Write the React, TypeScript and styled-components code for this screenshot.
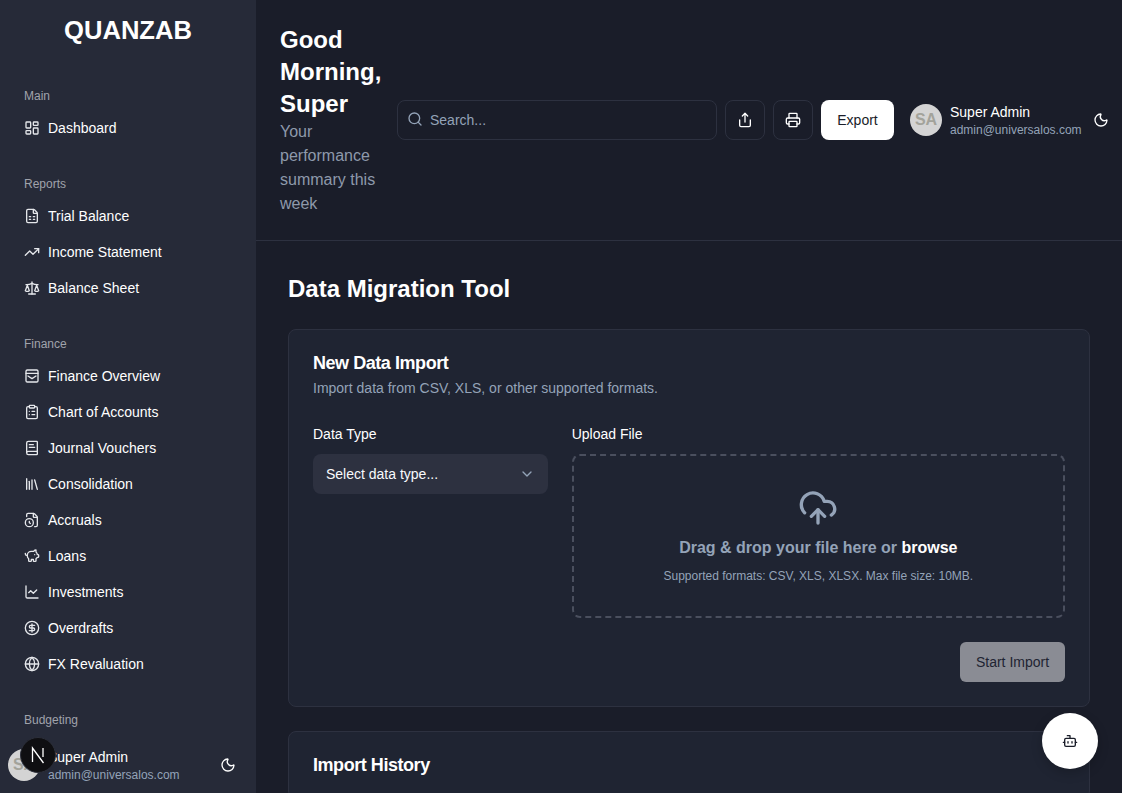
import React from "react";
import styled, { createGlobalStyle } from "styled-components";
import {
  LayoutDashboard, FileSpreadsheet, TrendingUp, Scale, ClipboardList, Library,
  FileClock, PiggyBank, ChartLine, CircleDollarSign, Globe, Moon, Search, Share, Printer,
  ChevronDown, CloudUpload, Bot, BookText,
} from "lucide-react";

const Global = createGlobalStyle`
  * { box-sizing: border-box; }
  html, body { margin: 0; height: 100%; overflow: hidden; background: #1a1d29; }
  body { font-family: "Liberation Sans", Arial, sans-serif; color: #fff; }
`;

const Shell = styled.div`
  display: flex;
  height: 793px;
  overflow: hidden;
`;
const Sidebar = styled.aside`
  width: 256px;
  flex: none;
  background: #262a38;
  display: flex;
  flex-direction: column;
  height: 100%;
`;
const Logo = styled.div`
  font-size: 25.6px;
  font-weight: 700;
  line-height: 32px;
  text-align: center;
  padding-top: 14px;
  height: 88px;
`;
const Nav = styled.nav`
  flex: 1;
  min-height: 0;
  overflow: hidden;
  padding: 0 24px;
`;
const Section = styled.section`
  margin-bottom: 30px;
`;
const SectionLabel = styled.div`
  font-size: 12px;
  line-height: 16px;
  color: #a0a3ac;
  margin-bottom: 6px;
`;
const NavItem = styled.a`
  display: flex;
  align-items: center;
  gap: 8px;
  height: 36px;
  font-size: 14px;
  color: #fff;
  svg { flex: none; color: #e5e7eb; }
`;
const SideFooter = styled.div`
  flex: none;
  height: 56px;
  display: flex;
  align-items: center;
  padding: 0 20px 0 8px;
  gap: 8px;
  background: #262a38;
`;
const Avatar = styled.div`
  width: 32px;
  height: 32px;
  flex: none;
  border-radius: 50%;
  background: #d4d4d4;
  color: #a3a39b;
  font-weight: 700;
  font-size: 16px;
  display: flex;
  align-items: center;
  justify-content: center;
`;
const UserText = styled.div<{ $grow?: boolean }>`
  flex: ${(p) => (p.$grow ? 1 : "none")};
  min-width: 0;
`;
const UserName = styled.div`
  font-size: 14px;
  line-height: 20px;
  color: #fff;
`;
const UserEmail = styled.div`
  font-size: 12px;
  line-height: 16px;
  color: #94a3b8;
`;
const DevBadge = styled.div`
  position: absolute;
  left: 20px;
  bottom: 20px;
  width: 36px;
  height: 36px;
  border-radius: 50%;
  background: #0f0f12;
  border: 1px solid #2c2f3a;
  display: flex;
  align-items: center;
  justify-content: center;
`;
const Main = styled.main`
  flex: 1;
  min-width: 0;
  overflow: hidden;
`;
const Header = styled.header`
  display: flex;
  align-items: center;
  gap: 16px;
  padding: 24px;
  height: 241px;
  border-bottom: 1px solid #2d3140;
`;
const Greeting = styled.div`
  flex: none;
  width: 101px;
`;
const Title = styled.h1`
  margin: 0;
  font-size: 24px;
  line-height: 32px;
  font-weight: 700;
`;
const Subtitle = styled.p`
  margin: 0;
  font-size: 16px;
  line-height: 24px;
  color: #8e99ab;
`;
const Actions = styled.div`
  display: flex;
  align-items: center;
  gap: 8px;
  flex: none;
`;
const SearchBox = styled.div`
  width: 320px;
  height: 40px;
  display: flex;
  align-items: center;
  gap: 7px;
  padding: 0 9px;
  border: 1px solid #2d3140;
  border-radius: 8px;
  color: #94a3b8;
  font-size: 14px;
  svg { margin-bottom: 2px; }
`;
const IconButton = styled.button`
  width: 40px;
  height: 40px;
  display: flex;
  align-items: center;
  justify-content: center;
  background: transparent;
  border: 1px solid #2d3140;
  border-radius: 8px;
  color: #fff;
  padding: 0;
`;
const ExportButton = styled.button`
  width: 73px;
  height: 40px;
  background: #fff;
  border: 0;
  border-radius: 8px;
  font: 14px "Liberation Sans", Arial, sans-serif;
  color: #1a1d29;
`;
const HeaderUser = styled.div`
  display: flex;
  align-items: center;
  gap: 8px;
  margin-left: 8px;
`;
const ThemeIcon = styled.span`
  display: flex;
  color: #fff;
  margin-left: 3px;
`;
const Content = styled.div`
  padding: 32px;
`;
const PageTitle = styled.h2`
  margin: 0 0 24px;
  font-size: 24px;
  line-height: 32px;
  font-weight: 700;
`;
const Card = styled.section`
  background: #1f2432;
  border: 1px solid #2d3140;
  border-radius: 8px;
  padding: 24px;
  margin-bottom: 24px;
`;
const CardTitle = styled.h3`
  margin: 0;
  font-size: 18px;
  line-height: 18px;
  font-weight: 700;
  letter-spacing: -0.025em;
`;
const CardSub = styled.p`
  margin: 6px 0 26px;
  font-size: 14px;
  line-height: 20px;
  color: #94a3b8;
`;
const FormGrid = styled.div`
  display: grid;
  grid-template-columns: repeat(3, 1fr);
  gap: 24px;
`;
const Field = styled.div<{ $span?: number }>`
  grid-column: span ${(p) => p.$span ?? 1};
`;
const Label = styled.div`
  font-size: 14px;
  line-height: 20px;
  margin-bottom: 10px;
  color: #fff;
`;
const SelectBox = styled.div`
  height: 40px;
  background: #2d3140;
  border-radius: 8px;
  display: flex;
  align-items: center;
  justify-content: space-between;
  padding: 0 13px;
  font-size: 14px;
  color: #f8fafc;
  svg { color: #94a3b8; }
`;
const DropZone = styled.div`
  height: 164px;
  border: 2px dashed #4a4f5e;
  border-radius: 8px;
  display: flex;
  flex-direction: column;
  align-items: center;
  padding-top: 32px;
  color: #94a3b8;
`;
const DropTitle = styled.div`
  margin-top: 8px;
  font-size: 16px;
  line-height: 24px;
  font-weight: 700;
  color: #94a3b8;
  b { color: #fff; }
`;
const DropHint = styled.div`
  margin-top: 8px;
  font-size: 12px;
  line-height: 16px;
  color: #94a3b8;
`;
const FormFooter = styled.div`
  display: flex;
  justify-content: flex-end;
  margin-top: 24px;
`;
const StartButton = styled.button`
  width: 105px;
  height: 40px;
  border: 0;
  border-radius: 6px;
  background: #8a8c94;
  color: #1f2432;
  font: 14px "Liberation Sans", Arial, sans-serif;
`;
const Fab = styled.button`
  position: absolute;
  right: 24px;
  bottom: 24px;
  width: 56px;
  height: 56px;
  border-radius: 50%;
  border: 0;
  padding: 0;
  background: #fff;
  color: #1a1d29;
  display: flex;
  align-items: center;
  justify-content: center;
  box-shadow: 0 4px 12px rgba(0,0,0,.2);
`;

const OverviewIcon = ({ size = 16 }: { size?: number }) => (
  <svg width={size} height={size} viewBox="0 0 24 24" fill="none" stroke="currentColor" strokeWidth="2" strokeLinecap="round" strokeLinejoin="round">
    <rect x="3" y="3" width="18" height="18" rx="2" />
    <path d="M3 8h18" />
    <path d="M6 12l6 4 6-4" />
  </svg>
);

const nav = [
  { label: "Main", items: [["Dashboard", LayoutDashboard]] },
  { label: "Reports", items: [["Trial Balance", FileSpreadsheet], ["Income Statement", TrendingUp], ["Balance Sheet", Scale]] },
  { label: "Finance", items: [["Finance Overview", OverviewIcon], ["Chart of Accounts", ClipboardList], ["Journal Vouchers", BookText], ["Consolidation", Library], ["Accruals", FileClock], ["Loans", PiggyBank], ["Investments", ChartLine], ["Overdrafts", CircleDollarSign], ["FX Revaluation", Globe]] },
  { label: "Budgeting", items: [] },
] as { label: string; items: [string, React.ComponentType<{ size?: number }>][] }[];

export default function App() {
  return (
    <Shell>
      <Global />
      <Sidebar>
        <Logo>QUANZAB</Logo>
        <Nav>
          {nav.map((s) => (
            <Section key={s.label}>
              <SectionLabel>{s.label}</SectionLabel>
              {s.items.map(([name, Icon]) => (
                <NavItem key={name}><Icon size={16} />{name}</NavItem>
              ))}
            </Section>
          ))}
        </Nav>
        <SideFooter>
          <Avatar>SA</Avatar>
          <UserText $grow>
            <UserName>Super Admin</UserName>
            <UserEmail>admin@universalos.com</UserEmail>
          </UserText>
          <Moon size={16} color="#fff" />
        </SideFooter>
      </Sidebar>
      <DevBadge>
        <svg width="16" height="18" viewBox="0 0 16 18" fill="none" stroke="#fff" strokeWidth="1.3">
          <path d="M2.5 16V2l11 15M13 2v9" />
        </svg>
      </DevBadge>
      <Main>
        <Header>
          <Greeting>
            <Title>Good Morning, Super</Title>
            <Subtitle>Your performance summary this week</Subtitle>
          </Greeting>
          <Actions>
            <SearchBox><Search size={16} />Search...</SearchBox>
            <IconButton><Share size={16} /></IconButton>
            <IconButton><Printer size={16} /></IconButton>
            <ExportButton>Export</ExportButton>
            <HeaderUser>
              <Avatar>SA</Avatar>
              <UserText>
                <UserName>Super Admin</UserName>
                <UserEmail>admin@universalos.com</UserEmail>
              </UserText>
              <ThemeIcon><Moon size={16} /></ThemeIcon>
            </HeaderUser>
          </Actions>
        </Header>
        <Content>
          <PageTitle>Data Migration Tool</PageTitle>
          <Card>
            <CardTitle>New Data Import</CardTitle>
            <CardSub>Import data from CSV, XLS, or other supported formats.</CardSub>
            <FormGrid>
              <Field>
                <Label>Data Type</Label>
                <SelectBox>Select data type...<ChevronDown size={16} /></SelectBox>
              </Field>
              <Field $span={2}>
                <Label>Upload File</Label>
                <DropZone>
                  <CloudUpload size={40} strokeWidth={2} />
                  <DropTitle>Drag &amp; drop your file here or <b>browse</b></DropTitle>
                  <DropHint>Supported formats: CSV, XLS, XLSX. Max file size: 10MB.</DropHint>
                </DropZone>
              </Field>
            </FormGrid>
            <FormFooter><StartButton>Start Import</StartButton></FormFooter>
          </Card>
          <Card>
            <CardTitle>Import History</CardTitle>
          </Card>
        </Content>
      </Main>
      <Fab><Bot size={16} /></Fab>
    </Shell>
  );
}
